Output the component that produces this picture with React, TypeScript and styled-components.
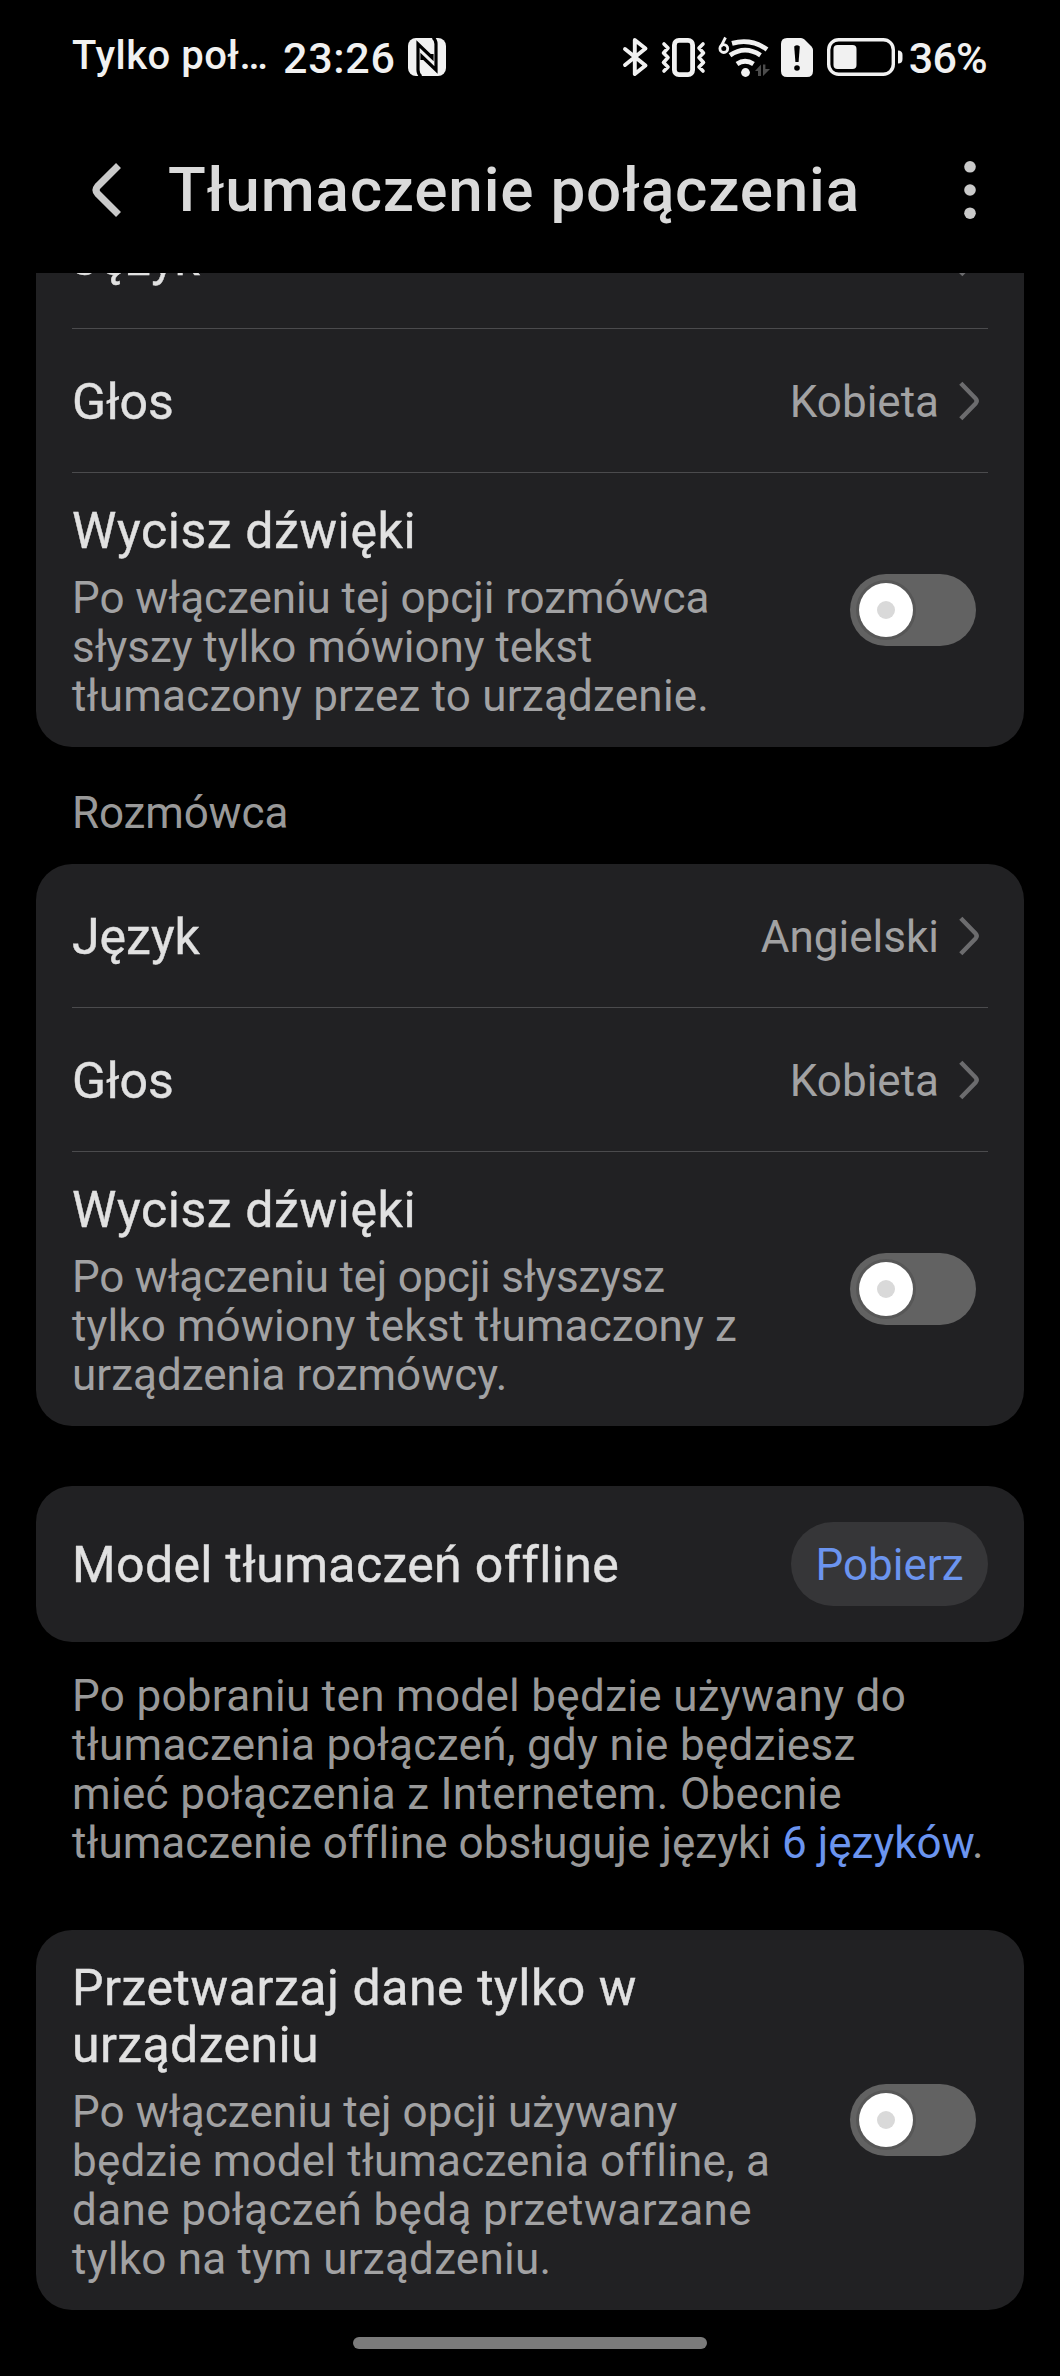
import React from 'react';
import styled, { createGlobalStyle } from 'styled-components';

const GlobalStyle = createGlobalStyle`
  html, body { margin: 0; padding: 0; background: #000; }
  * { box-sizing: border-box; }
  p, h1, h2 { margin: 0; }
`;

const Screen = styled.div`
  width: 1060px;
  height: 2376px;
  overflow: hidden;
  display: flex;
  flex-direction: column;
  background: #000;
  color: #e1e1e1;
  font-family: Roboto, 'Noto Sans', sans-serif;
`;

const StatusBar = styled.div`
  height: 114px;
  flex: none;
  padding: 0 73px 0 72px;
  display: flex;
  justify-content: space-between;
  align-items: center;
  color: #f1f1f1;
  font-weight: 500;
  white-space: nowrap;
`;

const StatusGroup = styled.div`
  display: flex;
  align-items: center;
`;

const Carrier = styled.span`
  width: 211px;
  font-size: 40px;
  line-height: 48px;
  margin-top: -3px;
  letter-spacing: 0.5px;
`;

const Clock = styled.span`
  width: 125px;
  font-size: 43px;
  line-height: 50px;
  margin-top: 2px;
  letter-spacing: 0.7px;
`;

const Percent = styled.span`
  font-size: 43px;
  line-height: 50px;
  margin-top: 2px;
  letter-spacing: -0.8px;
`;

const Icon = styled.svg<{ $gap?: number; $before?: number }>`
  display: block;
  flex: none;
  overflow: visible;
  margin-left: ${(p) => p.$before ?? 0}px;
  margin-right: ${(p) => p.$gap ?? 0}px;
`;

const TitleBar = styled.header`
  height: 151px;
  flex: none;
  margin-bottom: 8px;
  padding: 0 84px 0 92px;
  display: flex;
  align-items: center;
`;

const ScreenTitle = styled.h1`
  flex: 1;
  margin-left: 47px;
  font-size: 62px;
  line-height: 72px;
  font-weight: 500;
  color: #dadada;
  letter-spacing: 0.8px;
  white-space: nowrap;
`;

const ScrollArea = styled.main`
  height: 2037px;
  flex: none;
  overflow: hidden;
  padding: 0 36px;
`;

const Card = styled.section<{ $top?: number }>`
  margin-top: ${(p) => p.$top ?? 0}px;
  border-radius: 36px;
  background: #212123;
  padding: 0 36px;
`;

const Row = styled.div<{ $height?: number }>`
  height: ${(p) => p.$height ?? 143}px;
  display: flex;
  align-items: center;
  justify-content: space-between;
`;

const RowLabel = styled.div`
  padding-top: 3px;
`;

const Divider = styled.div`
  height: 1px;
  background: #4b4b4d;
`;

const Label = styled.h2`
  font-size: 50px;
  line-height: 57px;
  font-weight: 450;
  -webkit-text-stroke: 0.4px #e1e1e1;
  color: #e1e1e1;
  white-space: nowrap;
`;

const Value = styled.div`
  display: flex;
  align-items: center;
  padding-right: 9px;
`;

const ValueText = styled.span`
  padding-top: 3px;
  font-size: 44px;
  line-height: 49px;
  color: #a2a2a3;
`;

const ToggleRow = styled.div`
  display: flex;
  align-items: center;
  justify-content: space-between;
  padding-right: 12px;
`;

const ToggleText = styled.div`
  padding: 30px 0 26px;
`;

const Description = styled.p`
  margin-top: 14px;
  font-size: 44px;
  line-height: 49px;
  color: #a2a2a3;
  white-space: nowrap;
`;

const Line = styled.span<{ $spacing: number }>`
  letter-spacing: ${(p) => p.$spacing}px;
`;

const Track = styled.button`
  flex: none;
  width: 126px;
  height: 72px;
  padding: 9px;
  border: 0;
  border-radius: 36px;
  background: #626262;
`;

const Knob = styled.span`
  display: flex;
  align-items: center;
  justify-content: center;
  width: 54px;
  height: 54px;
  border-radius: 50%;
  background: #fff;
  box-shadow: 0 0 0 3px #575757;

  &::after {
    content: '';
    width: 18px;
    height: 18px;
    border-radius: 50%;
    background: #d9d9d9;
  }
`;

const SectionTitle = styled.h2`
  height: 117px;
  padding: 42px 36px 0;
  font-size: 44px;
  line-height: 49px;
  font-weight: 400;
  color: #999;
  letter-spacing: -0.15px;
`;

const DownloadButton = styled.button`
  width: 197px;
  height: 84px;
  padding: 2px 0 0;
  border: 0;
  border-radius: 42px;
  background: #363638;
  color: #6b94ef;
  font: 400 44px/49px Roboto, 'Noto Sans', sans-serif;
`;

const Note = styled.p`
  margin: 30px 0 0 36px;
  height: 258px;
  font-size: 44px;
  line-height: 49px;
  color: #999;
  white-space: nowrap;
`;

const Link = styled.a`
  color: #6b94ef;
`;

const HomeBar = styled.div`
  width: 354px;
  height: 12px;
  border-radius: 6px;
  margin: 27px auto 0;
  background: #7b7b7b;
`;

/* A line of copy and its tracking in pixels. */
type CopyLine = [text: string, spacing: number];

const Lines = ({ lines }: { lines: CopyLine[] }) => (
  <>
    {lines.map(([text, spacing], i) => (
      <React.Fragment key={text}>
        {i > 0 && <br />}
        <Line $spacing={spacing}>{text}</Line>
      </React.Fragment>
    ))}
  </>
);

const Chevron = () => (
  <Icon $before={20} width="20" height="40" viewBox="0 0 20 40" fill="none" stroke="#6c6c6e" strokeWidth="4.4">
    <path d="M1.8 2.2 L16.6 17.6 Q18.8 20 16.6 22.4 L1.8 37.8" />
  </Icon>
);

const Toggle = () => (
  <Track type="button" role="switch" aria-checked={false}>
    <Knob />
  </Track>
);

const NfcIcon = () => (
  <Icon width="38" height="38" viewBox="0 0 38 38">
    <rect x="0" y="0" width="38" height="38" rx="8" fill="#f1f1f1" />
    <path d="M13 38.5 Q10 36 10 32 V6 L24 19.5 V16 M25 -0.5 Q28 2 28 6 V32 L14 18.5 V22" fill="none" stroke="#000" strokeWidth="3.2" />
  </Icon>
);

const BluetoothIcon = () => (
  <Icon $gap={13} width="25" height="38" viewBox="0 0 25 38" fill="none" stroke="#f1f1f1" strokeWidth="3.9" strokeLinejoin="round" strokeLinecap="round">
    <path d="M2 11 L22.5 27.5 L11.8 36 V2 L22.5 10.5 L2 27" />
  </Icon>
);

const VibrateIcon = () => (
  <Icon $gap={13} width="45" height="39" viewBox="0 0 45 39" fill="none" stroke="#f1f1f1">
    <rect x="13.4" y="2.4" width="18.2" height="34.2" rx="4.5" strokeWidth="4.8" />
    <path d="M3 6 L7 10 L2.5 15 L7 19.5 L2.5 24.5 L7 29 L3 33 M42 6 L38 10 L42.5 15 L38 19.5 L42.5 24.5 L38 29 L42 33" strokeWidth="3.6" strokeLinecap="round" strokeLinejoin="round" />
  </Icon>
);

const WifiIcon = () => (
  <Icon $gap={12} width="50" height="39" viewBox="0 0 50 39" fill="none" stroke="#f1f1f1">
    <path d="M6.5 -0.5 L1.9 8.6" strokeWidth="2.8" />
    <circle cx="4.8" cy="10.6" r="3.9" strokeWidth="2.8" />
    <path d="M13 5.4 Q32 0 48 11.5 M11 17.2 Q26 7 41.5 17.2 M18 26 Q26 20.5 34.5 26" strokeWidth="4.8" />
    <circle cx="26.5" cy="34.5" r="4.4" fill="#f1f1f1" stroke="none" />
    <path d="M36 33 L42 26.5 V38 H39 V33 Z M44 26.5 H46.4 V31 H51 L44 38 Z" fill="#4c4c4c" stroke="none" />
  </Icon>
);

const SimIcon = () => (
  <Icon $gap={14} width="32" height="39" viewBox="0 0 32 39">
    <path d="M6 0 H20 Q22 0 23.5 1.5 L30.5 8.5 Q32 10 32 12 V33 Q32 39 26 39 H6 Q0 39 0 33 V6 Q0 0 6 0 Z" fill="#f1f1f1" />
    <path d="M13.2 8.4 Q16 6 18.8 8.4 L17.6 24 H14.4 Z" fill="#000" />
    <circle cx="16" cy="30" r="2.8" fill="#000" />
  </Icon>
);

const BatteryIcon = () => (
  <Icon $gap={6} width="76" height="38" viewBox="0 0 76 38">
    <rect x="1.7" y="1.7" width="64.6" height="34.6" rx="10" fill="none" stroke="#f1f1f1" strokeWidth="3.4" />
    <rect x="6.5" y="7" width="23" height="24" rx="4" fill="#f1f1f1" />
    <path d="M71 12.5 Q75.5 12.5 75.5 17 V21 Q75.5 25.5 71 25.5 Z" fill="#f1f1f1" />
  </Icon>
);

const SettingsRow = ({ label, value }: { label: string; value?: string }) => (
  <>
    <Row>
      <RowLabel><Label>{label}</Label></RowLabel>
      <Value>
        {value && <ValueText>{value}</ValueText>}
        <Chevron />
      </Value>
    </Row>
    <Divider />
  </>
);

const ToggleSetting = ({ title, text }: { title: CopyLine[]; text: CopyLine[] }) => (
  <ToggleRow>
    <ToggleText>
      <Label><Lines lines={title} /></Label>
      <Description><Lines lines={text} /></Description>
    </ToggleText>
    <Toggle />
  </ToggleRow>
);

export default function App() {
  return (
    <Screen>
      <GlobalStyle />
      <StatusBar>
        <StatusGroup>
          <Carrier>Tylko poł…</Carrier>
          <Clock>23:26</Clock>
          <NfcIcon />
        </StatusGroup>
        <StatusGroup>
          <BluetoothIcon />
          <VibrateIcon />
          <WifiIcon />
          <SimIcon />
          <BatteryIcon />
          <Percent>36%</Percent>
        </StatusGroup>
      </StatusBar>
      <TitleBar>
        <Icon width="29" height="54" viewBox="0 0 29 54" fill="none" stroke="#cacaca" strokeWidth="7">
          <path d="M26.5 2.5 L5.5 23.5 Q2.5 27 5.5 30.5 L26.5 51.5" />
        </Icon>
        <ScreenTitle>Tłumaczenie połączenia</ScreenTitle>
        <Icon width="12" height="58" viewBox="0 0 12 58" fill="#cacaca">
          <circle cx="6" cy="5.8" r="5.8" />
          <circle cx="6" cy="29" r="5.8" />
          <circle cx="6" cy="52.2" r="5.8" />
        </Icon>
      </TitleBar>
      <ScrollArea>
        <Card $top={-88}>
          <SettingsRow label="Język" />
          <SettingsRow label="Głos" value="Kobieta" />
          <ToggleSetting
            title={[['Wycisz dźwięki', 0.6]]}
            text={[
              ['Po włączeniu tej opcji rozmówca', -0.06],
              ['słyszy tylko mówiony tekst', -0.05],
              ['tłumaczony przez to urządzenie.', 0.22],
            ]}
          />
        </Card>
        <SectionTitle>Rozmówca</SectionTitle>
        <Card>
          <SettingsRow label="Język" value="Angielski" />
          <SettingsRow label="Głos" value="Kobieta" />
          <ToggleSetting
            title={[['Wycisz dźwięki', 0.6]]}
            text={[
              ['Po włączeniu tej opcji słyszysz', -0.23],
              ['tylko mówiony tekst tłumaczony z', 0.11],
              ['urządzenia rozmówcy.', 0],
            ]}
          />
        </Card>
        <Card $top={60}>
          <Row $height={156}>
            <RowLabel>
              <Label><Lines lines={[['Model tłumaczeń offline', 0.36]]} /></Label>
            </RowLabel>
            <DownloadButton type="button">Pobierz</DownloadButton>
          </Row>
        </Card>
        <Note>
          <Lines
            lines={[
              ['Po pobraniu ten model będzie używany do', 0.31],
              ['tłumaczenia połączeń, gdy nie będziesz', 0.31],
              ['mieć połączenia z Internetem. Obecnie', 0.33],
              ['tłumaczenie offline obsługuje języki ', 0.04],
            ]}
          />
          <Link>6 języków</Link>.
        </Note>
        <Card>
          <ToggleSetting
            title={[['Przetwarzaj dane tylko w', 0.55], ['urządzeniu', 0.4]]}
            text={[
              ['Po włączeniu tej opcji używany', 0.06],
              ['będzie model tłumaczenia offline, a', 0.17],
              ['dane połączeń będą przetwarzane', 0.39],
              ['tylko na tym urządzeniu.', 0.24],
            ]}
          />
        </Card>
      </ScrollArea>
      <HomeBar />
    </Screen>
  );
}
